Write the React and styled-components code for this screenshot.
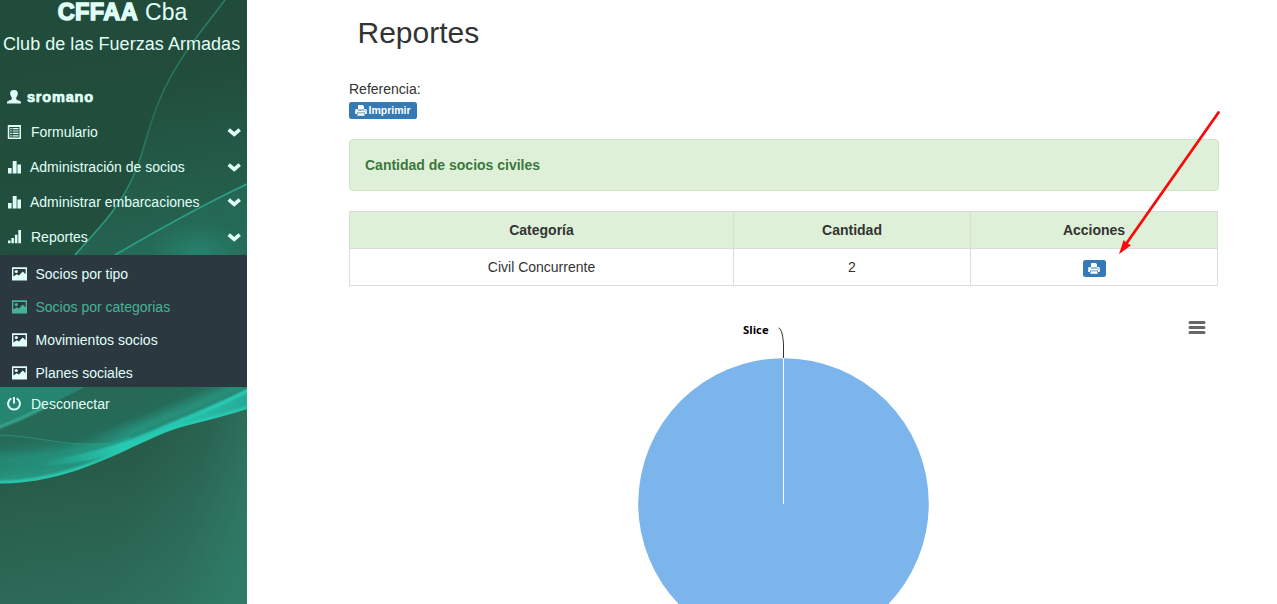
import React from 'react';
import styled, { createGlobalStyle } from 'styled-components';

const GlobalStyle = createGlobalStyle`
  *, *::before, *::after { box-sizing: border-box; }
  body {
    margin: 0;
    overflow: hidden;
    background: #fff;
    color: #333;
    font-family: "Liberation Sans", Arial, sans-serif;
    font-size: 14px;
    line-height: 20px;
  }
  svg { display: block; flex: none; }
`;

const Page = styled.div`
  position: relative;
  display: flex;
  height: 604px;
  overflow: hidden;
`;

const Sidebar = styled.aside`
  position: relative;
  flex: none;
  width: 247px;
  height: 604px;
  color: #e0fff8;
  background: #245040;
`;

const Backdrop = styled.svg`
  position: absolute;
  inset: 0;
`;

const SidebarContent = styled.div`
  position: relative;
`;

const Brand = styled.h1`
  margin: 0;
  height: 26px;
  font-size: 23px;
  line-height: 25px;
  font-weight: 400;
  display: flex;
  justify-content: center;
  gap: 7px;
  padding-right: 2px;
`;

const BrandStrong = styled.span`
  font-weight: 700;
  font-size: 23.5px;
  line-height: 25px;
  letter-spacing: 0.4px;
  -webkit-text-stroke: 1.4px currentColor;
`;

const Tagline = styled.div`
  height: 53px;
  padding: 8px 0 0 3px;
  font-size: 18px;
  line-height: 20px;
  letter-spacing: 0.04px;
  white-space: nowrap;
`;

const Row = styled.div`
  display: flex;
  align-items: center;
  height: 35px;
  padding: 0 6px 0 7px;
`;

const LastRow = styled(Row)`
  height: 33px;
`;

const RowIcon = styled.span`
  flex: none;
  width: ${(p) => p.$w || 24}px;
`;

const Label = styled.span`
  flex: 1;
  white-space: nowrap;
`;

const UserName = styled.span`
  font-weight: 700;
  font-size: 14.5px;
  letter-spacing: 0.8px;
  -webkit-text-stroke: 0.7px currentColor;
`;

const SubMenu = styled.div`
  height: 132px;
  margin-top: 1px;
  padding-top: 2px;
  background: #2c3840;
`;

const SubRow = styled.div`
  display: flex;
  align-items: center;
  height: 33px;
  padding-left: 12px;
  color: ${(p) => (p.$active ? '#46b494' : '#e0fff8')};
`;

const Main = styled.main`
  flex: 1;
  padding: 0 58px 0 102px;
`;

const Title = styled.h2`
  margin: 0;
  padding: 16px 0 0 8.5px;
  height: 79px;
  font-size: 30px;
  line-height: 33px;
  font-weight: 400;
`;

const Reference = styled.div`
  height: 23px;
`;

const Button = styled.span`
  display: inline-flex;
  align-items: center;
  justify-content: center;
  gap: 1px;
  width: ${(p) => p.$w}px;
  height: 17px;
  border-radius: 2.5px;
  background: #337ab7;
  color: #fff;
  font-size: 10.5px;
  line-height: 17px;
  font-weight: 700;
  vertical-align: top;
`;

const ButtonRow = styled.div`
  height: 37px;
`;

const Alert = styled.div`
  height: 52px;
  margin-bottom: 20px;
  padding: 15px;
  border: 1px solid #d0e6c4;
  border-radius: 4px;
  background: #dff0d8;
  color: #3c763d;
  font-weight: 700;
`;

const Table = styled.table`
  width: 869px;
  table-layout: fixed;
  border-collapse: collapse;
  text-align: center;
`;

const HeadCell = styled.th`
  height: 37px;
  padding: 0;
  border: 1px solid #d9dfd6;
  background: #dff0d8;
`;

const Cell = styled.td`
  height: 37px;
  padding: 0;
  border: 1px solid #ddd;
`;

const CellButton = styled(Button)`
  margin-top: 3px;
`;

const Chart = styled.svg`
  margin-top: 20px;
`;

const Pointer = styled.svg`
  position: absolute;
  left: 1110px;
  top: 104px;
`;

const PrintIcon = () => (
  <svg width="12" height="11" viewBox="0 0 12 11">
    <path fill="#fff" d="M3 0h4.8L9 1.3V4h1.6q1.2 0 1.2 1.2V9H10V7.4H2V9H.2V5.2Q.2 4 1.4 4H3zM2.8 8.3h6.4l.6 2.5H2.2z" />
    <path fill="#337ab7" d="M2.6 4.6h6.8v.8H2.6zM9.8 5.4h1v.8h-1z" />
  </svg>
);

const UserIcon = () => (
  <svg width="14" height="14" viewBox="0 0 14 14">
    <path fill="currentColor" d="M7 0C9.8 0 11 1.6 10.8 3.7 10.7 5.2 10 6.5 9.2 7.4v1.4c0 .7.5 1 1.3 1.3l2.4.9c.8.4 1.1.8 1.1 1.8v.8H0v-.8c0-1 .3-1.4 1.1-1.8l2.4-.9c.8-.3 1.3-.6 1.3-1.3V7.4C4 6.5 3.3 5.2 3.2 3.7 3 1.6 4.2 0 7 0z" />
  </svg>
);

const FormIcon = () => (
  <svg width="14" height="14" viewBox="0 0 14 14" fill="currentColor">
    <path fillRule="evenodd" d="M.8 0H14v14H.8zM2.3 2v10.5h10.2V2z" />
    <path d="M3.2 3h1.5v1.2H3.2zM5.6 3h6v1.2h-6zM3.2 5.4h1.5v1.2H3.2zM5.6 5.4h6v1.2h-6zM3.2 7.8h1.5V9H3.2zM5.6 7.8h6V9h-6zM3.2 10.2h1.5v1.2H3.2zM5.6 10.2h6v1.2h-6z" />
  </svg>
);

const StatsIcon = () => (
  <svg width="14" height="14" viewBox="0 0 14 14" fill="currentColor">
    <path d="M1 8h3.6v5.5H1zM5.7 1h3.9v12.5H5.7zM10.4 4.6H14v8.9h-3.6z" />
  </svg>
);

const SignalIcon = () => (
  <svg width="14" height="14" viewBox="0 0 14 14" fill="currentColor">
    <path d="M1 10.4h2.5v2.8H1zM4.4 8h2.5v5.2H4.4zM7.9 4.8h2.5v8.4H7.9zM11.3 0H14v13.2h-2.7z" />
  </svg>
);

const PictureIcon = () => (
  <svg width="15" height="14" viewBox="0 0 15 14">
    <path fill="currentColor" fillRule="evenodd" d="M0 .3h15v13.2H0zM1.4 2v7.6l3.3-2.4 2.2 1.3 3.8-3.9 2.9 2.6V2z" />
    <circle cx="4.3" cy="4.5" r="1.6" fill="currentColor" />
  </svg>
);

const PowerIcon = () => (
  <svg width="14" height="14" viewBox="0 0 14 14" fill="none" stroke="currentColor" strokeWidth="2">
    <path d="M4.4 1.4A5.9 5.9 0 1 0 9.6 1.4M7 0v6.4" />
  </svg>
);

const ChevronIcon = () => (
  <svg width="14" height="10" viewBox="0 0 14 10" fill="none" stroke="currentColor" strokeWidth="3.6">
    <path d="M1.7 2.6L7.2 7.4 12.7 2.6" />
  </svg>
);

const SidebarArt = () => (
  <Backdrop width="247" height="604" viewBox="0 0 247 604">
    <defs>
      <linearGradient id="base" gradientUnits="userSpaceOnUse" x1="60" y1="0" x2="160" y2="604">
        <stop offset="0" stopColor="#214b3a" />
        <stop offset="0.45" stopColor="#22503e" />
        <stop offset="0.75" stopColor="#285b49" />
        <stop offset="1" stopColor="#2d6d5a" />
      </linearGradient>
      <linearGradient id="edge" gradientUnits="userSpaceOnUse" x1="130" x2="247" y1="485" y2="510">
        <stop offset="0" stopColor="#2f7f6a" stopOpacity="0" />
        <stop offset="0.55" stopColor="#2f7f6a" stopOpacity="0.25" />
        <stop offset="1" stopColor="#2f7f6a" stopOpacity="0.75" />
      </linearGradient>
      <linearGradient id="veil" gradientUnits="userSpaceOnUse" x1="175" y1="70" x2="205" y2="260">
        <stop offset="0" stopColor="#26705b" stopOpacity="0" />
        <stop offset="1" stopColor="#266f5b" stopOpacity="0.7" />
      </linearGradient>
      <linearGradient id="thread" gradientUnits="userSpaceOnUse" x1="0" y1="0" x2="0" y2="255">
        <stop offset="0" stopColor="#297f68" />
        <stop offset="0.5" stopColor="#26705a" />
        <stop offset="1" stopColor="#2aa58a" />
      </linearGradient>
      <radialGradient id="glow">
        <stop offset="0" stopColor="#279780" stopOpacity="0.5" />
        <stop offset="1" stopColor="#279780" stopOpacity="0" />
      </radialGradient>
      <linearGradient id="wave" gradientUnits="userSpaceOnUse" x1="48" y1="434" x2="56" y2="478">
        <stop offset="0" stopColor="#24806a" stopOpacity="0.1" />
        <stop offset="0.45" stopColor="#248e78" stopOpacity="0.75" />
        <stop offset="1" stopColor="#269c86" />
      </linearGradient>
      <linearGradient id="haze" gradientUnits="userSpaceOnUse" x1="60" y1="0" x2="247" y2="0">
        <stop offset="0" stopColor="#27b39c" stopOpacity="0" />
        <stop offset="0.4" stopColor="#27b39c" stopOpacity="0.6" />
        <stop offset="1" stopColor="#27b39c" stopOpacity="0.5" />
      </linearGradient>
      <linearGradient id="ribbon" gradientUnits="userSpaceOnUse" x1="40" y1="0" x2="247" y2="0">
        <stop offset="0" stopColor="#28cdb5" stopOpacity="0" />
        <stop offset="0.4" stopColor="#28cdb5" stopOpacity="0.95" />
        <stop offset="0.65" stopColor="#28c5ae" />
        <stop offset="1" stopColor="#27ab97" />
      </linearGradient>
      <linearGradient id="crest" gradientUnits="userSpaceOnUse" x1="150" y1="0" x2="220" y2="0">
        <stop offset="0" stopColor="#2bd0b9" stopOpacity="0" />
        <stop offset="1" stopColor="#2bd0b9" />
      </linearGradient>
      <filter id="soft" filterUnits="userSpaceOnUse" x="-40" y="340" width="340" height="200">
        <feGaussianBlur stdDeviation="5" />
      </filter>
      <filter id="fine" filterUnits="userSpaceOnUse" x="-20" y="360" width="300" height="150">
        <feGaussianBlur stdDeviation="0.8" />
      </filter>
      <clipPath id="above">
        <path d="M0 380H247V409C212 421 182 424 155 437C120 452 65 484 0 483.5z" />
      </clipPath>
    </defs>
    <rect width="247" height="604" fill="url(#base)" />
    <rect y="387" width="247" height="217" fill="url(#edge)" />
    <path d="M225 0C205 27 180 55 163 92S147 145 133 177S95 232 75 255H247V0z" fill="url(#veil)" />
    <path d="M247 184Q190 211 115 255H247z" fill="#26735f" opacity=".45" />
    <ellipse cx="198" cy="252" rx="50" ry="30" fill="url(#glow)" />
    <path d="M225 0C205 27 180 55 163 92S147 145 133 177S95 232 75 255" fill="none" stroke="url(#thread)" strokeWidth="1.6" />
    <path d="M247 184Q190 211 115 255" fill="none" stroke="#2a9f86" strokeWidth="1.8" />
    <g clipPath="url(#above)">
      <rect y="380" width="247" height="110" fill="#266f5c" opacity=".75" />
      <path d="M0 387H85Q42 409 0 427z" fill="#278b75" opacity=".85" />
      <path d="M-3 428.500Q22 419 45 407" fill="none" stroke="#48cdb2" strokeWidth="2" opacity=".8" filter="url(#fine)" />
      <path d="M0 435C45 437 65 447 108 443L130 435V460L0 490z" fill="url(#wave)" />
      <path d="M0 435C45 437 65 447 108 443" fill="none" stroke="#2b9b82" strokeWidth="1" opacity=".7" />
      <path d="M50 456C130 440 200 402 265 376" fill="none" stroke="url(#haze)" strokeWidth="14" filter="url(#soft)" />
      <path d="M-20 458C50 460 100 452 150 434" fill="none" stroke="#27b39c" strokeWidth="6" opacity=".35" filter="url(#soft)" />
      <path d="M40 462C105 451 135 438 165 425Q210 407 250 388V412C212 421 182 424 155 437L125 450Q90 464 40 466z" fill="url(#ribbon)" filter="url(#fine)" />
      <path d="M150 432Q205 413 250 389.500" fill="none" stroke="url(#crest)" strokeWidth="3" filter="url(#fine)" />
      <path d="M-3 482.500C65 483 120 451 155 436C182 423 212 420 250 407" fill="none" stroke="#2bcdb5" strokeWidth="3" filter="url(#fine)" />
    </g>
  </Backdrop>
);

const menu = [
  { label: 'Formulario', Icon: FormIcon, w: 24 },
  { label: 'Administración de socios', Icon: StatsIcon, w: 23 },
  { label: 'Administrar embarcaciones', Icon: StatsIcon, w: 23 },
  { label: 'Reportes', Icon: SignalIcon, w: 24 },
];

const subMenu = ['Socios por tipo', 'Socios por categorias', 'Movimientos socios', 'Planes sociales'];

export default function App() {
  return (
    <Page>
      <GlobalStyle />
      <Sidebar>
        <SidebarArt />
        <SidebarContent>
          <Brand><BrandStrong>CFFAA</BrandStrong>Cba</Brand>
          <Tagline>Club de las Fuerzas Armadas</Tagline>
          <Row>
            <RowIcon $w={20}><UserIcon /></RowIcon>
            <UserName>sromano</UserName>
          </Row>
          {menu.map(({ label, Icon, w }) => (
            <Row key={label}>
              <RowIcon $w={w}><Icon /></RowIcon>
              <Label>{label}</Label>
              <ChevronIcon />
            </Row>
          ))}
          <SubMenu>
            {subMenu.map((label) => (
              <SubRow key={label} $active={label === 'Socios por categorias'}>
                <RowIcon $w={23.5}><PictureIcon /></RowIcon>
                <Label>{label}</Label>
              </SubRow>
            ))}
          </SubMenu>
          <LastRow>
            <RowIcon><PowerIcon /></RowIcon>
            <Label>Desconectar</Label>
          </LastRow>
        </SidebarContent>
      </Sidebar>
      <Main>
        <Title>Reportes</Title>
        <Reference>Referencia:</Reference>
        <ButtonRow><Button $w={68}><PrintIcon />Imprimir</Button></ButtonRow>
        <Alert>Cantidad de socios civiles</Alert>
        <Table>
          <colgroup>
            <col width="384" />
            <col width="237" />
            <col width="247" />
          </colgroup>
          <thead>
            <tr>
              <HeadCell>Categoría</HeadCell>
              <HeadCell>Cantidad</HeadCell>
              <HeadCell>Acciones</HeadCell>
            </tr>
          </thead>
          <tbody>
            <tr>
              <Cell>Civil Concurrente</Cell>
              <Cell>2</Cell>
              <Cell><CellButton $w={23}><PrintIcon /></CellButton></Cell>
            </tr>
          </tbody>
        </Table>
        <Chart width="870" height="400" viewBox="349 306 870 400">
          <circle cx="783.5" cy="503.5" r="145.3" fill="#7cb5ec" />
          <path d="M783.5 358V504" stroke="#fff" />
          <path d="M778.5 328C781.5 328 783.5 338 783.5 346V358" fill="none" stroke="#333" />
          <text x="743" y="334" fontFamily="Open Sans, sans-serif" fontSize="11.3" fontWeight="700" fill="#000">Slice</text>
          <path d="M1190 322.500H1204M1190 327.500H1204M1190 332.500H1204" stroke="#666" strokeWidth="3" strokeLinecap="round" />
        </Chart>
      </Main>
      <Pointer width="120" height="160" viewBox="1110 104 120 160">
        <path d="M1218.500 112.500L1126 244" stroke="#f90b0b" strokeWidth="2.8" strokeLinecap="round" />
        <path d="M1119 254.3L1123.6 240L1126.6 242.8L1131 245.3z" fill="#f90b0b" />
      </Pointer>
    </Page>
  );
}
